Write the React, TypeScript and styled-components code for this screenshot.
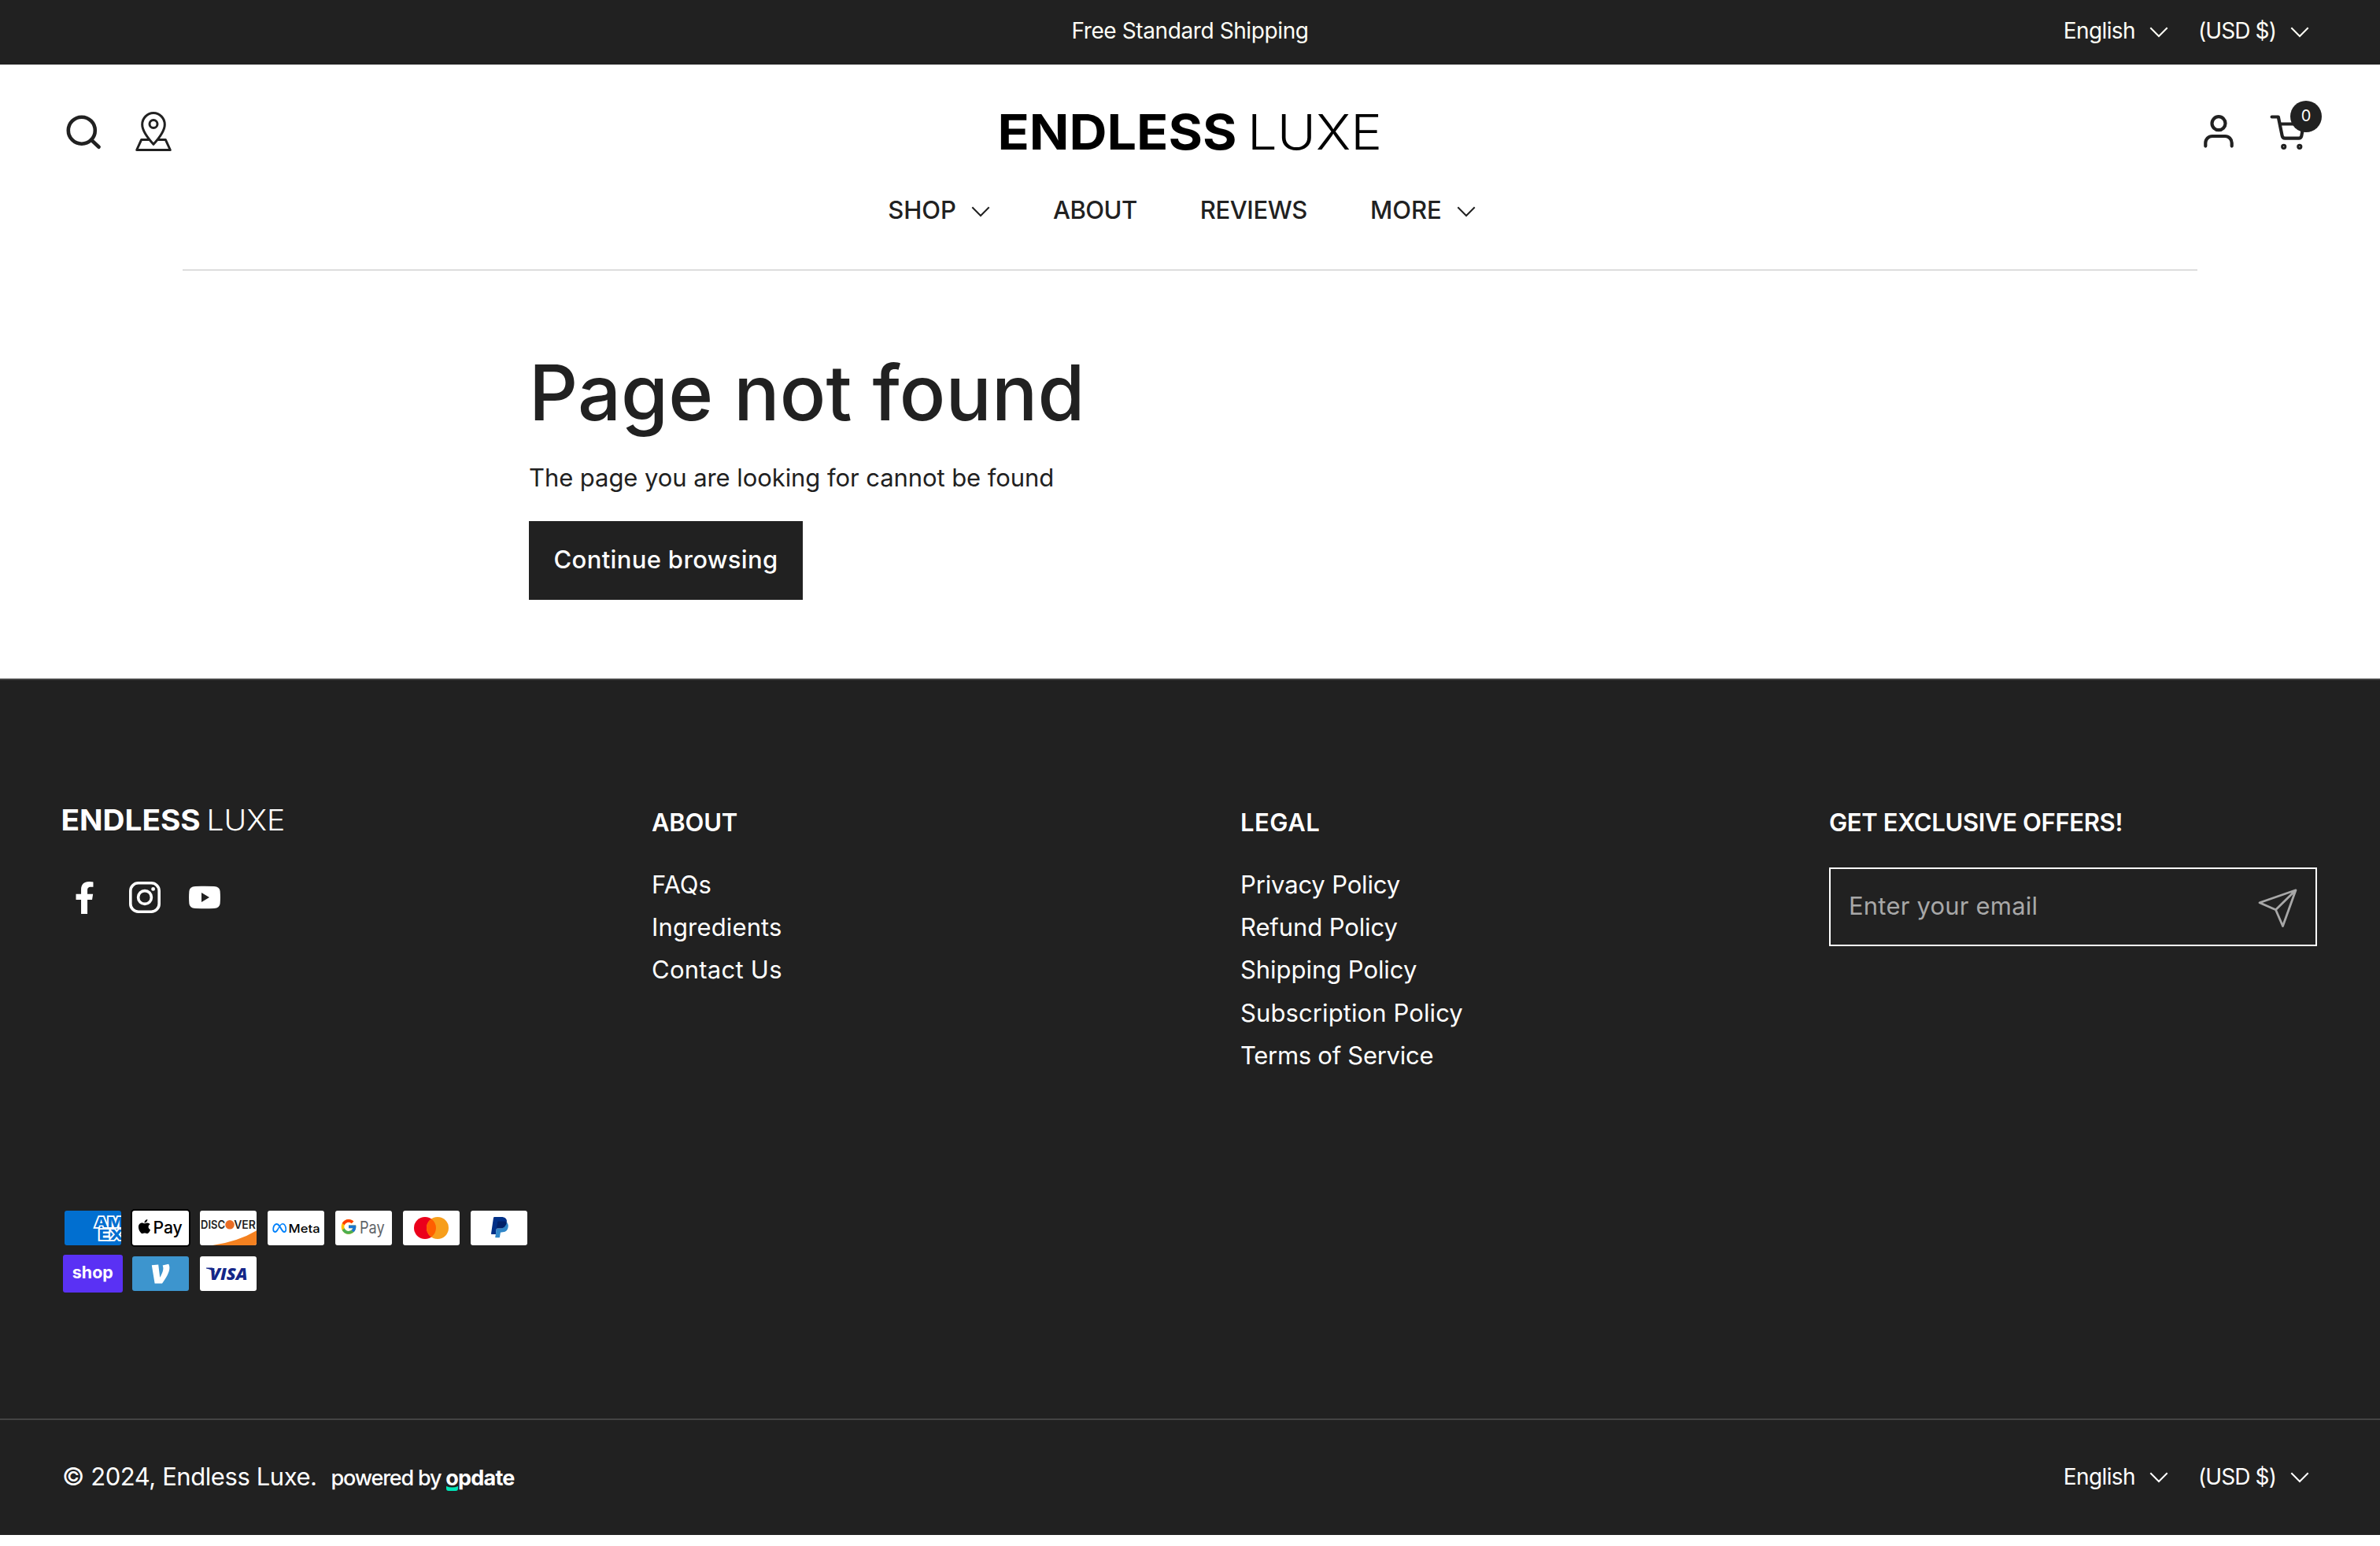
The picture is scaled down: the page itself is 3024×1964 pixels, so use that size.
import React from 'react';
import { FaApple, FaFacebookF } from 'react-icons/fa';
import { FaMeta } from 'react-icons/fa6';
import { FcGoogle } from 'react-icons/fc';
import styled, { createGlobalStyle } from 'styled-components';

const COLORS = {
  DARK: '#212121',
  LIGHT: '#ffffff',
  CREAM: '#fffff6',
  LINE: '#dddddd',
  DARK_LINE: '#434343',
  MUTED: '#a8a8a8',
};

const FONT = "Inter, 'Liberation Sans', sans-serif";

const NAV = [
  { label: 'SHOP', spacing: 0, menu: true },
  { label: 'ABOUT', spacing: -0.5 },
  { label: 'REVIEWS', spacing: -0.4 },
  { label: 'MORE', spacing: 0, menu: true },
];

const LINKS = [
  {
    title: 'ABOUT',
    spacing: -0.2,
    items: [
      { label: 'FAQs', spacing: 0 },
      { label: 'Ingredients', spacing: 0.15 },
      { label: 'Contact Us', spacing: 0.25 },
    ],
  },
  {
    title: 'LEGAL',
    spacing: 0.5,
    items: [
      { label: 'Privacy Policy', spacing: -0.15 },
      { label: 'Refund Policy', spacing: -0.1 },
      { label: 'Shipping Policy', spacing: -0.05 },
      { label: 'Subscription Policy', spacing: 0.1 },
      { label: 'Terms of Service', spacing: -0.28 },
    ],
  },
];

const App = () => {
  return (
    <>
      <GlobalStyle />
      <TopBar>
        <span />
        <Announcement>Free Standard Shipping</Announcement>
        <Localization />
      </TopBar>
      <Header />
      <Main>
        <Title>Page not found</Title>
        <Text>The page you are looking for cannot be found</Text>
        <Button>Continue browsing</Button>
      </Main>
      <Footer />
    </>
  );
};

export default App;

const Header = () => {
  return (
    <HeaderWrapper>
      <HeaderRow>
        <Actions>
          <Icon viewBox="0 0 52 52" $stroke={4.6}>
            <circle cx="23.8" cy="24.7" r="17" />
            <path d="M36 36.7l9.6 9" />
          </Icon>
          <Icon viewBox="0 0 52 52" $stroke={3}>
            <path d="M26 42.3C19 34.6 11.7 25.6 11.7 17.2a14.3 14.6 0 0 1 28.6 0C40.3 25.6 33 34.6 26 42.3z" />
            <circle cx="26" cy="16.5" r="5" />
            <path d="M19.5 36.4h-8.8L4.7 49.5h42.6l-6-13.1h-8.8" />
          </Icon>
        </Actions>
        <Logo width={480} color="#000" />
        <Actions $end>
          <Icon viewBox="0 0 52 52" $stroke={4.2}>
            <circle cx="26" cy="15.7" r="8.5" />
            <path d="M9.3 44.6v-4.1a8.5 8.5 0 0 1 8.5-8.5h16.4a8.5 8.5 0 0 1 8.5 8.5v4.1" />
          </Icon>
          <Cart>
            <Icon viewBox="0 0 52 52" $stroke={4.2}>
              <path d="M4.6 7.5h8.2l4.9 24.2q.6 3 3.6 3h17.4q3 0 3.6-3L45 16.5H14.8" />
              <circle cx="19.7" cy="45.3" r="1.5" />
              <circle cx="39.8" cy="45.3" r="1.5" />
            </Icon>
            <Badge>0</Badge>
          </Cart>
        </Actions>
      </HeaderRow>
      <Nav>
        {NAV.map(({ label, spacing, menu }) => (
          <NavItem key={label} $spacing={spacing}>
            {label}
            {menu && <Chevron />}
          </NavItem>
        ))}
      </Nav>
    </HeaderWrapper>
  );
};

const Footer = () => {
  return (
    <FooterWrapper>
      <Columns>
        <div>
          <FooterLogo>
            <Logo width={280} color="#fff" />
          </FooterLogo>
          <Socials>
            <FaFacebookF size={41} />
            <Instagram />
            <Youtube />
          </Socials>
        </div>
        {LINKS.map(({ title, spacing, items }) => (
          <div key={title}>
            <ColumnTitle $spacing={spacing}>{title}</ColumnTitle>
            <List>
              {items.map((item) => (
                <ListItem key={item.label} $spacing={item.spacing}>
                  {item.label}
                </ListItem>
              ))}
            </List>
          </div>
        ))}
        <div>
          <ColumnTitle $spacing={-0.35}>GET EXCLUSIVE OFFERS!</ColumnTitle>
          <Form>
            <Input placeholder="Enter your email" />
            <Send />
          </Form>
        </div>
      </Columns>
      <Payments />
      <BottomBar>
        <Copyright>© 2024, Endless Luxe.</Copyright>
        <Powered>
          <span>powered by</span>
          <Brand>
            opdate
            <Smile viewBox="0 0 15 6">
              <path d="M0 0q7.5 3 15 0v3q0 3-3 3H3q-3 0-3-3z" />
            </Smile>
          </Brand>
        </Powered>
        <Localization />
      </BottomBar>
    </FooterWrapper>
  );
};

const Localization = () => (
  <Selectors>
    <Selector $spacing={-0.6}>
      <span>English</span>
      <Chevron />
    </Selector>
    <Selector $spacing={-0.9}>
      <span>(USD $)</span>
      <Chevron />
    </Selector>
  </Selectors>
);

const Chevron = () => (
  <ChevronIcon viewBox="0 0 24 14">
    <path d="M1.3 1.2L12 12l10.7-10.8" />
  </ChevronIcon>
);

const Logo = ({ width, color }: any) => (
  <LogoMark width={width} height={(width * 46) / 480} viewBox="0 0 480 46" fill={color}>
    <text x="-4.5" y="45.5" fontWeight="650" textLength="304" lengthAdjust="spacingAndGlyphs">
      ENDLESS
    </text>
    <text x="313" y="45.5" fontWeight="300" textLength="171" lengthAdjust="spacingAndGlyphs">
      LUXE
    </text>
  </LogoMark>
);

const Instagram = () => (
  <svg width="40" height="40" viewBox="0 0 40 40" fill="none" stroke="currentColor" strokeWidth="3.6">
    <rect x="1.8" y="1.8" width="36.4" height="36.4" rx="10" />
    <circle cx="20" cy="20" r="8.4" />
    <circle cx="30.6" cy="9.4" r="2.4" fill="currentColor" stroke="none" />
  </svg>
);

const Youtube = () => (
  <svg width="40" height="40" viewBox="0 0 40 40" fill="currentColor">
    <path
      fillRule="evenodd"
      d="M8 6Q20 5.6 32 6Q39 6.5 39.6 12Q40.3 20 39.6 28Q39 33.5 32 34Q20 34.4 8 34Q1 33.5 .4 28Q-.3 20 .4 12Q1 6.5 8 6zM16 14v12l10-6z"
    />
  </svg>
);

const Send = () => (
  <SendIcon viewBox="0 0 50 50">
    <path d="M48 1.8L2 17.7l20.5 9L31.5 47.5zM48 1.8L22.5 26.7" />
  </SendIcon>
);

const Payments = () => (
  <Cards>
    <Card viewBox="0 0 38 24">
      <clipPath id="amex">
        <rect x="1" y="1" width="36" height="22" rx="1.5" />
      </clipPath>
      <g clipPath="url(#amex)">
        <rect x="1" y="1" width="36" height="22" fill="#016fd0" />
        <AmexText x="20.3" y="11.5" textLength="18" lengthAdjust="spacingAndGlyphs">
          AM
        </AmexText>
        <AmexText x="22.8" y="19.4" textLength="15.5" lengthAdjust="spacingAndGlyphs">
          EX
        </AmexText>
      </g>
    </Card>
    <Card viewBox="0 0 38 24">
      <rect width="38" height="24" rx="2.5" fill="#000" />
      <CardFace />
      <FaApple x="3.6" y="5.9" size={10.3} color="#000" />
      <text x="14.2" y="15.7" fontSize="10.8" fontWeight="500" textLength="18.7" lengthAdjust="spacingAndGlyphs">
        Pay
      </text>
    </Card>
    <Card viewBox="0 0 38 24">
      <CardFace />
      <path d="M9 23Q25.5 20.5 37 13.6V21.5Q37 23 35.5 23z" fill="#f48120" />
      <g fill="#231f20" fontSize="7.2" fontWeight="600">
        <text x="1.5" y="12.5" textLength="15.5" lengthAdjust="spacingAndGlyphs">
          DISC
        </text>
        <text x="22.6" y="12.5" textLength="13.9" lengthAdjust="spacingAndGlyphs">
          VER
        </text>
      </g>
      <circle cx="20" cy="9.9" r="2.9" fill="#ea6d25" />
    </Card>
    <Card viewBox="0 0 38 24">
      <CardFace />
      <FaMeta x="4.1" y="7.5" size={9} color="#0081fb" />
      <text x="14.3" y="14.8" fontSize="7.3" fontWeight="500" textLength="20" lengthAdjust="spacingAndGlyphs">
        Meta
      </text>
    </Card>
    <Card viewBox="0 0 38 24">
      <CardFace />
      <FcGoogle x="3.9" y="5.6" size={11.2} />
      <text x="16.5" y="15.3" fontSize="10.4" fill="#5f6368" textLength="15.8" lengthAdjust="spacingAndGlyphs">
        Pay
      </text>
    </Card>
    <Card viewBox="0 0 38 24">
      <CardFace />
      <circle cx="15" cy="12" r="7" fill="#eb001b" />
      <circle cx="23" cy="12" r="7" fill="#f79e1b" />
      <path d="M19 6.26a7 7 0 0 1 0 11.48a7 7 0 0 1 0-11.48z" fill="#ff5f00" />
    </Card>
    <Card viewBox="0 0 38 24">
      <CardFace />
      <path
        fill="#003087"
        d="M23.9 8.3c.2-1 0-1.7-.6-2.3-.6-.7-1.7-1-3.1-1h-4.1c-.3 0-.5.2-.6.5L14 15.6c0 .2.1.4.3.4H17l.4-3.4 1.8-2.2 4.7-2.1z"
      />
      <path
        fill="#3086c8"
        d="M23.9 8.3l-.2.2c-.5 2.8-2.2 3.8-4.6 3.8H18c-.3 0-.5.2-.6.5l-.6 3.9-.2 1c0 .2.1.4.3.4H19c.3 0 .5-.2.5-.4v-.1l.4-2.4v-.1c0-.2.3-.4.5-.4h.3c2.1 0 3.7-.8 4.1-3.2.2-1 .1-1.8-.4-2.4-.1-.5-.3-.7-.5-.8z"
      />
      <path
        fill="#012169"
        d="M23.3 8.1c-.1-.1-.2-.1-.3-.1-.1 0-.2 0-.3-.1-.3-.1-.7-.1-1.1-.1h-3c-.1 0-.2 0-.2.1-.2.1-.3.2-.3.4l-.7 4.4v.1c0-.3.3-.5.6-.5h1.3c2.5 0 4.1-1 4.6-3.8v-.2c-.1-.1-.3-.2-.5-.2h-.1z"
      />
    </Card>
    <Card viewBox="0 0 38 24">
      <rect width="38" height="24" rx="1.5" fill="#5a31f4" />
      <text x="5.9" y="15.2" fontSize="10.8" fontWeight="700" fill="#fff" textLength="26" lengthAdjust="spacingAndGlyphs">
        shop
      </text>
    </Card>
    <Card viewBox="0 0 38 24">
      <CardFace fill="#3d95ce" />
      <path
        fill="#fff"
        d="M24.7 8.4c0 3-2.6 7-4.7 9.8h-4.7L13.4 6.6l4.2-.4 1 8.2c.9-1.5 2.1-4 2.1-5.7 0-.9-.2-1.5-.4-2l3.8-.8c.4.8.6 1.5.6 2.5z"
      />
    </Card>
    <Card viewBox="0 0 38 24">
      <CardFace />
      <path d="M5 8.3h4l1.8 3.2Q8.5 9.2 5 8.7z" fill="#142688" />
      <VisaText x="7.3" y="16" textLength="24" lengthAdjust="spacingAndGlyphs">
        VISA
      </VisaText>
    </Card>
  </Cards>
);

const CardFace = ({ fill = '#fff' }: any) => (
  <rect x="1" y="1" width="36" height="22" rx="1.5" fill={fill} />
);

const GlobalStyle = createGlobalStyle`
  * {
    box-sizing: border-box;
  }

  body {
    margin: 0;
    background-color: ${COLORS.LIGHT};
    color: ${COLORS.DARK};
    font-family: ${FONT};
    font-size: 31px;
  }

  svg {
    flex-shrink: 0;
  }
`;

const TopBar = styled.div`
  display: grid;
  grid-template-columns: 1fr auto 1fr;
  align-items: center;
  height: 82px;
  padding: 0 90px;
  color: ${COLORS.CREAM};
  background-color: ${COLORS.DARK};
`;

const Announcement = styled.div`
  padding-bottom: 5px;
  font-size: 28px;
  letter-spacing: -0.4px;
`;

const Selectors = styled.div`
  display: flex;
  justify-content: flex-end;
  gap: 38px;
  margin-left: auto;
`;

const Selector = styled.div<{ $spacing: number }>`
  display: flex;
  align-items: center;
  gap: 18px;
  font-size: 28px;
  line-height: 34px;
  letter-spacing: ${({ $spacing }) => $spacing}px;

  span {
    padding-bottom: 5px;
  }
`;

const ChevronIcon = styled.svg`
  width: 24px;
  height: 14px;
  fill: none;
  stroke: currentColor;
  stroke-width: 2;
`;

const HeaderWrapper = styled.header`
  height: 262px;
`;

const HeaderRow = styled.div`
  display: grid;
  grid-template-columns: 1fr auto 1fr;
  align-items: center;
  height: 170px;
  padding: 0 90px;
`;

const Actions = styled.div<{ $end?: boolean }>`
  display: flex;
  gap: 37px;
  justify-content: ${({ $end }) => ($end ? 'flex-end' : 'flex-start')};
  margin-left: ${({ $end }) => ($end ? 0 : '-10px')};
`;

const Icon = styled.svg<{ $stroke: number }>`
  display: block;
  width: 52px;
  height: 52px;
  fill: none;
  stroke: ${COLORS.DARK};
  stroke-width: ${({ $stroke }) => $stroke};
  stroke-linecap: round;
  stroke-linejoin: round;
`;

const Cart = styled.div`
  position: relative;
`;

const Badge = styled.span`
  position: absolute;
  top: -13px;
  left: 28px;
  width: 40px;
  height: 40px;
  border-radius: 50%;
  color: ${COLORS.LIGHT};
  background-color: ${COLORS.DARK};
  font-size: 20px;
  line-height: 39px;
  text-align: center;
`;

const LogoMark = styled.svg`
  display: block;
  overflow: visible;
  font-family: ${FONT};
  font-size: 62px;
`;

const Nav = styled.nav`
  display: flex;
  justify-content: center;
  gap: 80px;
  width: 2560px;
  height: 92px;
  margin: 0 auto;
  padding-right: 21px;
  border-bottom: 2px solid ${COLORS.LINE};
`;

const NavItem = styled.a<{ $spacing: number }>`
  display: flex;
  align-items: center;
  gap: 19px;
  height: 29px;
  font-weight: 500;
  letter-spacing: ${({ $spacing }) => $spacing}px;

  svg {
    margin-top: 5px;
  }
`;

const Main = styled.main`
  height: 518px;
  padding: 100px 672px;
`;

const Title = styled.h1`
  margin: 0;
  font-size: 97px;
  font-weight: 500;
  line-height: 110px;
  letter-spacing: 0.1px;
`;

const Text = styled.p`
  margin: 26px 0 28px;
  line-height: 54px;
  letter-spacing: -0.07px;
`;

const Button = styled.button`
  width: 348px;
  height: 100px;
  padding: 0 0 3px;
  border: none;
  color: ${COLORS.LIGHT};
  background-color: ${COLORS.DARK};
  font-family: inherit;
  font-size: 31px;
  font-weight: 500;
  letter-spacing: 0.35px;
`;

const FooterWrapper = styled.footer`
  height: 1088px;
  border-top: 2px solid ${COLORS.DARK_LINE};
  color: ${COLORS.LIGHT};
  background-color: ${COLORS.DARK};
`;

const Columns = styled.div`
  display: grid;
  grid-template-columns: repeat(4, 1fr);
  gap: 128px;
  height: 672px;
  padding: 160px 80px 0;
`;

const FooterLogo = styled.div`
  padding-top: 4px;
`;

const Socials = styled.div`
  display: flex;
  gap: 36px;
  margin-top: 65px;
  padding-left: 7px;
`;

const ColumnTitle = styled.h2<{ $spacing: number }>`
  margin: 0;
  font-size: 31px;
  font-weight: 600;
  line-height: 42px;
  letter-spacing: ${({ $spacing }) => $spacing}px;
`;

const List = styled.ul`
  margin: 30.5px 0 0;
  padding: 0;
  list-style: none;
`;

const ListItem = styled.li<{ $spacing: number }>`
  line-height: 54.4px;
  letter-spacing: ${({ $spacing }) => $spacing}px;
`;

const Form = styled.div`
  display: flex;
  align-items: center;
  width: 620px;
  height: 100px;
  margin-top: 36px;
  padding: 0 23px;
  border: 2px solid ${COLORS.LIGHT};
`;

const Input = styled.input`
  flex: 1;
  padding: 0 0 3px;
  border: none;
  outline: none;
  background: none;
  font-family: inherit;
  font-size: 31px;
  letter-spacing: 0.2px;

  &::placeholder {
    color: ${COLORS.MUTED};
    opacity: 1;
  }
`;

const SendIcon = styled.svg`
  width: 50px;
  height: 50px;
  margin-top: 4px;
  fill: none;
  stroke: ${COLORS.MUTED};
  stroke-width: 2.8;
  stroke-linejoin: round;
`;

const Cards = styled.div`
  display: flex;
  flex-wrap: wrap;
  align-content: flex-start;
  gap: 10px;
  width: 620px;
  height: 266px;
  margin-left: 80px;
`;

const Card = styled.svg`
  width: 76px;
  height: 48px;
  font-family: ${FONT};
`;

const AmexText = styled.text`
  fill: #016fd0;
  stroke: #fff;
  stroke-width: 1.7;
  paint-order: stroke;
  font-size: 9px;
  font-weight: 800;
`;

const VisaText = styled.text`
  fill: #142688;
  font-family: 'Open Sans', sans-serif;
  font-size: 10.8px;
  font-style: italic;
  font-weight: 800;
`;

const BottomBar = styled.div`
  display: flex;
  align-items: center;
  height: 148px;
  padding: 0 90px 0 79px;
  border-top: 2px solid ${COLORS.DARK_LINE};

  ${Selector} span {
    padding-bottom: 3px;
  }
`;

const Copyright = styled.div`
  padding-bottom: 4px;
  letter-spacing: -0.43px;
`;

const Powered = styled.div`
  display: flex;
  gap: 6px;
  margin-left: 18px;
  font-size: 27px;
  font-weight: 500;
  letter-spacing: -1.2px;
`;

const Brand = styled.b`
  position: relative;
  font-weight: 700;
  letter-spacing: -0.8px;
`;

const Smile = styled.svg`
  position: absolute;
  bottom: 0;
  left: 1px;
  width: 15px;
  height: 6px;
  fill: #00e5b8;
`;
